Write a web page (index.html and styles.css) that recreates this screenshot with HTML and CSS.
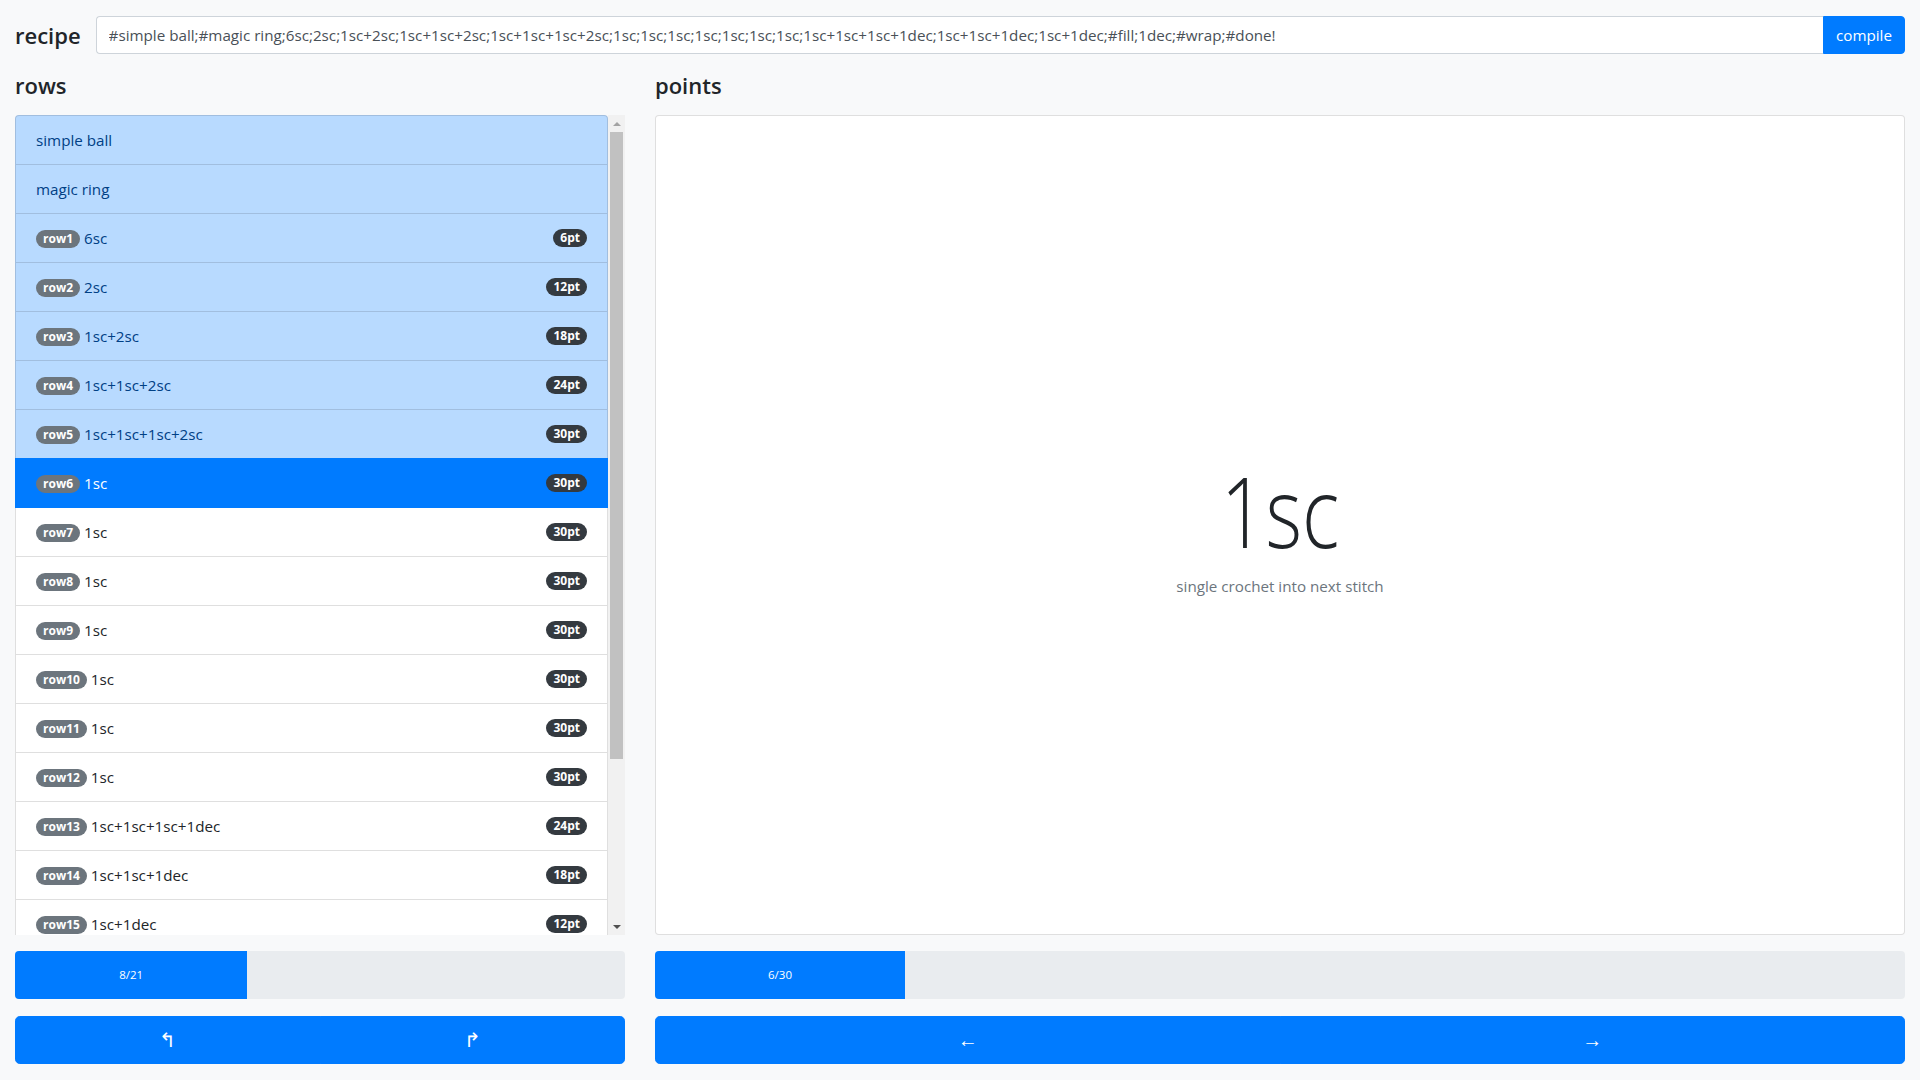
FILE: index.html
```html
<!DOCTYPE html>
<html lang="en">
<head>
<meta charset="utf-8">
<title>recipe</title>
<link rel="stylesheet" href="styles.css">
</head>
<body>
<div class="page">
  <div class="recipe-bar">
    <h4 class="heading heading-inline">recipe</h4>
    <div class="input-group">
      <input class="form-control" type="text" value="#simple ball;#magic ring;6sc;2sc;1sc+2sc;1sc+1sc+2sc;1sc+1sc+1sc+2sc;1sc;1sc;1sc;1sc;1sc;1sc;1sc;1sc+1sc+1sc+1dec;1sc+1sc+1dec;1sc+1dec;#fill;1dec;#wrap;#done!">
      <button class="btn btn-primary btn-append">compile</button>
    </div>
  </div>
  <div class="main">
    <div class="col">
      <h4 class="heading">rows</h4>
      <div class="list-wrap">
        <div class="list-scroll">
          <ul class="list-group">
            <li class="item item-primary"><span class="item-text">simple ball</span></li>
            <li class="item item-primary"><span class="item-text">magic ring</span></li>
            <li class="item item-primary"><span class="item-text"><span class="badge badge-secondary">row1</span> 6sc</span><span class="badge badge-dark">6pt</span></li>
            <li class="item item-primary"><span class="item-text"><span class="badge badge-secondary">row2</span> 2sc</span><span class="badge badge-dark">12pt</span></li>
            <li class="item item-primary"><span class="item-text"><span class="badge badge-secondary">row3</span> 1sc+2sc</span><span class="badge badge-dark">18pt</span></li>
            <li class="item item-primary"><span class="item-text"><span class="badge badge-secondary">row4</span> 1sc+1sc+2sc</span><span class="badge badge-dark">24pt</span></li>
            <li class="item item-primary"><span class="item-text"><span class="badge badge-secondary">row5</span> 1sc+1sc+1sc+2sc</span><span class="badge badge-dark">30pt</span></li>
            <li class="item item-active"><span class="item-text"><span class="badge badge-secondary">row6</span> 1sc</span><span class="badge badge-dark">30pt</span></li>
            <li class="item"><span class="item-text"><span class="badge badge-secondary">row7</span> 1sc</span><span class="badge badge-dark">30pt</span></li>
            <li class="item"><span class="item-text"><span class="badge badge-secondary">row8</span> 1sc</span><span class="badge badge-dark">30pt</span></li>
            <li class="item"><span class="item-text"><span class="badge badge-secondary">row9</span> 1sc</span><span class="badge badge-dark">30pt</span></li>
            <li class="item"><span class="item-text"><span class="badge badge-secondary">row10</span> 1sc</span><span class="badge badge-dark">30pt</span></li>
            <li class="item"><span class="item-text"><span class="badge badge-secondary">row11</span> 1sc</span><span class="badge badge-dark">30pt</span></li>
            <li class="item"><span class="item-text"><span class="badge badge-secondary">row12</span> 1sc</span><span class="badge badge-dark">30pt</span></li>
            <li class="item"><span class="item-text"><span class="badge badge-secondary">row13</span> 1sc+1sc+1sc+1dec</span><span class="badge badge-dark">24pt</span></li>
            <li class="item"><span class="item-text"><span class="badge badge-secondary">row14</span> 1sc+1sc+1dec</span><span class="badge badge-dark">18pt</span></li>
            <li class="item"><span class="item-text"><span class="badge badge-secondary">row15</span> 1sc+1dec</span><span class="badge badge-dark">12pt</span></li>
            <li class="item"><span class="item-text">fill</span></li>
            <li class="item"><span class="item-text"><span class="badge badge-secondary">row16</span> 1dec</span><span class="badge badge-dark">6pt</span></li>
            <li class="item"><span class="item-text">wrap</span></li>
            <li class="item"><span class="item-text">done!</span></li>
          </ul>
        </div>
        <div class="scrollbar">
          <div class="sb-btn"><span class="arrow-up"></span></div>
          <div class="sb-track"><div class="sb-thumb"></div></div>
          <div class="sb-btn"><span class="arrow-down"></span></div>
        </div>
      </div>
      <div class="progress"><div class="progress-bar" style="width: 38.095%">8/21</div></div>
      <div class="btn-group">
        <button class="btn btn-primary btn-lg btn-first">&#x21B0;</button>
        <button class="btn btn-primary btn-lg btn-last">&#x21B1;</button>
      </div>
    </div>
    <div class="col">
      <h4 class="heading">points</h4>
      <div class="panel">
        <div class="display">1sc</div>
        <div class="muted">single crochet into next stitch</div>
      </div>
      <div class="progress"><div class="progress-bar" style="width: 20%">6/30</div></div>
      <div class="btn-group">
        <button class="btn btn-primary btn-lg btn-first">&#x2190;</button>
        <button class="btn btn-primary btn-lg btn-last">&#x2192;</button>
      </div>
    </div>
  </div>
</div>
</body>
</html>
```

FILE: styles.css
```css
* { box-sizing: border-box; }

html, body {
  margin: 0;
  height: 100%;
}

body {
  background: #f8f9fa;
  color: #212529;
  font-family: "Open Sans", "Noto Sans", "Liberation Sans", sans-serif;
  font-size: 15.2px;
  line-height: 24px;
}

.page {
  height: 1080px;
  padding: 16px 15px;
  display: flex;
  flex-direction: column;
}

.recipe-bar {
  display: flex;
  align-items: center;
  height: 38px;
}

.heading {
  margin: 18px 0 16px;
  font-size: 22px;
  font-weight: 600;
  line-height: 27px;
}

.heading-inline {
  margin: 0 15px 0 0;
  flex: none;
}

.input-group {
  flex: 1;
  display: flex;
  height: 38px;
}

.form-control {
  flex: 1;
  min-width: 0;
  height: 38px;
  padding: 6px 12px;
  font-family: inherit;
  font-size: 15.2px;
  line-height: 24px;
  color: #495057;
  background: #fff;
  border: 1px solid #ced4da;
  border-right: 0;
  border-radius: 4px 0 0 4px;
  outline: none;
}

.btn {
  font-family: inherit;
  font-size: 15.2px;
  line-height: 24px;
  padding: 6px 12px;
  border: 1px solid transparent;
  cursor: pointer;
}

.btn-primary {
  background: #007bff;
  border-color: #007bff;
  color: #fff;
}

.btn-append {
  width: 82px;
  border-radius: 0 4px 4px 0;
}

.main {
  flex: 1;
  min-height: 0;
  display: grid;
  grid-template-columns: 610px 1fr;
  column-gap: 30px;
}

.col {
  display: flex;
  flex-direction: column;
  min-height: 0;
}

.list-wrap {
  flex: 1;
  min-height: 0;
  display: flex;
}

.list-scroll {
  flex: 1;
  min-width: 0;
  overflow: hidden;
}

.scrollbar {
  width: 17px;
  flex: none;
  background: #f1f1f1;
  display: flex;
  flex-direction: column;
}

.sb-btn {
  height: 17px;
  flex: none;
  display: flex;
  align-items: center;
  justify-content: center;
}

.arrow-up {
  width: 0;
  height: 0;
  border-left: 4px solid transparent;
  border-right: 4px solid transparent;
  border-bottom: 4px solid #a3a3a3;
}

.arrow-down {
  width: 0;
  height: 0;
  border-left: 4px solid transparent;
  border-right: 4px solid transparent;
  border-top: 4px solid #505050;
}

.sb-track {
  flex: 1;
  padding: 0 2px;
}

.sb-thumb {
  height: 627px;
  background: #c1c1c1;
}

.list-group {
  list-style: none;
  margin: 0;
  padding: 0;
}

.item {
  display: flex;
  align-items: center;
  justify-content: space-between;
  height: 49px;
  padding: 11px 20px 12px;
  background: #fff;
  border: 1px solid rgba(0, 0, 0, 0.125);
  border-top-width: 0;
}

.item:first-child {
  height: 50px;
  border-top-width: 1px;
  border-top-left-radius: 4px;
  border-top-right-radius: 4px;
}

.item-primary {
  background: #b8daff;
  color: #004085;
}

.item-active {
  background: #007bff;
  border-color: #007bff;
  color: #fff;
  margin-top: -1px;
  border-top-width: 1px;
  height: 50px;
}

.item-text {
  white-space: nowrap;
}

.badge {
  display: inline-block;
  padding: 3px 7px;
  font-size: 12px;
  font-weight: 700;
  line-height: 12px;
  border-radius: 160px;
  color: #fff;
  vertical-align: 1px;
}

.badge-secondary { background: #6c757d; }
.badge-dark { background: #343a40; }

.panel {
  flex: 1;
  min-height: 0;
  background: #fff;
  border: 1px solid rgba(0, 0, 0, 0.125);
  border-radius: 4px;
  display: flex;
  flex-direction: column;
  align-items: center;
  justify-content: center;
}

.display {
  font-size: 98px;
  font-weight: 300;
  line-height: 1.2;
  transform: scaleX(0.8);
}

.muted {
  color: #6c757d;
  margin-top: 5px;
}

.progress {
  margin-top: 16px;
  height: 48px;
  background: #e9ecef;
  border-radius: 4px;
  overflow: hidden;
  display: flex;
  font-size: 11.5px;
}

.progress-bar {
  background: #007bff;
  color: #fff;
  display: flex;
  align-items: center;
  justify-content: center;
}

.btn-group {
  margin-top: 17px;
  display: flex;
}

.btn-lg {
  flex: 1;
  height: 48px;
  padding: 8px 16px;
  font-size: 20px;
  line-height: 30px;
}

.btn-first { border-radius: 4.8px 0 0 4.8px; }
.btn-last { border-radius: 0 4.8px 4.8px 0; margin-left: -1px; }
```
